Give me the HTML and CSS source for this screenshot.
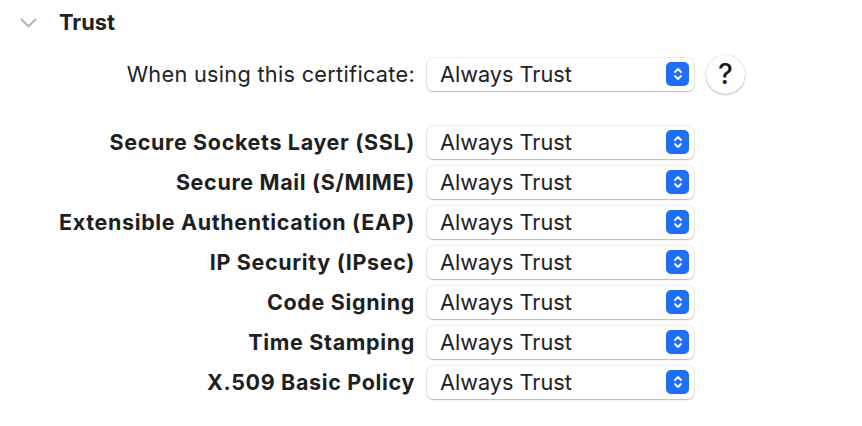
FILE: index.html
```html
<!DOCTYPE html>
<html>
<head>
<meta charset="utf-8">
<link rel="stylesheet" href="styles.css">
</head>
<body>
<div class="panel">
  <div class="header">
    <svg class="chev" width="17" height="10" viewBox="0 0 17 10"><path d="M1.5 1.5 L8.5 8.2 L15.5 1.5" fill="none" stroke="#b3b3b3" stroke-width="2" stroke-linecap="round" stroke-linejoin="round"/></svg>
    <span class="title">Trust</span>
  </div>
  <div class="main-row">
    <span class="main-label">When using this certificate:</span>
    <div class="popup"><span>Always Trust</span><span class="stepper"><svg width="10" height="16" viewBox="0 0 10 16"><path d="M2 6 L5 3 L8 6 M2 10 L5 13 L8 10" fill="none" stroke="#fff" stroke-width="1.8" stroke-linecap="round" stroke-linejoin="round"/></svg></span></div>
    <div class="help">?</div>
  </div>
  <div class="grid">
    <span class="label">Secure Sockets Layer (SSL)</span>
    <div class="popup"><span>Always Trust</span><span class="stepper"><svg width="10" height="16" viewBox="0 0 10 16"><path d="M2 6 L5 3 L8 6 M2 10 L5 13 L8 10" fill="none" stroke="#fff" stroke-width="1.8" stroke-linecap="round" stroke-linejoin="round"/></svg></span></div>
    <span class="label">Secure Mail (S/MIME)</span>
    <div class="popup"><span>Always Trust</span><span class="stepper"><svg width="10" height="16" viewBox="0 0 10 16"><path d="M2 6 L5 3 L8 6 M2 10 L5 13 L8 10" fill="none" stroke="#fff" stroke-width="1.8" stroke-linecap="round" stroke-linejoin="round"/></svg></span></div>
    <span class="label">Extensible Authentication (EAP)</span>
    <div class="popup"><span>Always Trust</span><span class="stepper"><svg width="10" height="16" viewBox="0 0 10 16"><path d="M2 6 L5 3 L8 6 M2 10 L5 13 L8 10" fill="none" stroke="#fff" stroke-width="1.8" stroke-linecap="round" stroke-linejoin="round"/></svg></span></div>
    <span class="label">IP Security (IPsec)</span>
    <div class="popup"><span>Always Trust</span><span class="stepper"><svg width="10" height="16" viewBox="0 0 10 16"><path d="M2 6 L5 3 L8 6 M2 10 L5 13 L8 10" fill="none" stroke="#fff" stroke-width="1.8" stroke-linecap="round" stroke-linejoin="round"/></svg></span></div>
    <span class="label">Code Signing</span>
    <div class="popup"><span>Always Trust</span><span class="stepper"><svg width="10" height="16" viewBox="0 0 10 16"><path d="M2 6 L5 3 L8 6 M2 10 L5 13 L8 10" fill="none" stroke="#fff" stroke-width="1.8" stroke-linecap="round" stroke-linejoin="round"/></svg></span></div>
    <span class="label">Time Stamping</span>
    <div class="popup"><span>Always Trust</span><span class="stepper"><svg width="10" height="16" viewBox="0 0 10 16"><path d="M2 6 L5 3 L8 6 M2 10 L5 13 L8 10" fill="none" stroke="#fff" stroke-width="1.8" stroke-linecap="round" stroke-linejoin="round"/></svg></span></div>
    <span class="label">X.509 Basic Policy</span>
    <div class="popup"><span>Always Trust</span><span class="stepper"><svg width="10" height="16" viewBox="0 0 10 16"><path d="M2 6 L5 3 L8 6 M2 10 L5 13 L8 10" fill="none" stroke="#fff" stroke-width="1.8" stroke-linecap="round" stroke-linejoin="round"/></svg></span></div>
  </div>
</div>
</body>
</html>
```
FILE: styles.css
```css
html, body {
  margin: 0;
  padding: 0;
  background: #ffffff;
}
body {
  width: 862px;
  height: 426px;
  font-family: Inter, "Noto Sans", "Liberation Sans", sans-serif;
  color: #1d1d1f;
}
.panel {
  padding-top: 8px;
}
.header {
  display: flex;
  align-items: center;
  height: 28px;
  padding-left: 20px;
}
.chev {
  display: block;
  margin-top: 1px;
}
.title {
  margin-left: 22px;
  font-size: 21.8px;
  font-weight: 700;
  color: #1f1f1f;
}
.main-row {
  display: flex;
  align-items: center;
  margin-top: 18px;
  padding-left: 100px;
  height: 40px;
}
.main-label {
  width: 315px;
  text-align: right;
  font-size: 21.7px;
  letter-spacing: 0.3px;
  color: #222;
  white-space: nowrap;
}
.main-row .popup {
  margin-left: 12px;
}
.help {
  margin-left: 12px;
  width: 39px;
  height: 39px;
  border-radius: 50%;
  background: #fff;
  box-shadow: 0 0 0 0.5px rgba(0,0,0,0.12), 0 1px 2px rgba(0,0,0,0.22);
  display: flex;
  align-items: center;
  justify-content: center;
  font-size: 28px;
  font-weight: 500;
  color: #1a1a1a;
}
.grid {
  display: grid;
  grid-template-columns: 415px 267px;
  column-gap: 12px;
  grid-auto-rows: 40px;
  align-items: center;
  margin-top: 28px;
}
.label {
  text-align: right;
  font-size: 21.5px;
  font-weight: 700;
  letter-spacing: 0.65px;
  color: #1f1f1f;
  white-space: nowrap;
}
.popup {
  box-sizing: border-box;
  width: 267px;
  height: 33px;
  border-radius: 6px;
  background: #fff;
  box-shadow: 0 0 0 0.5px rgba(0,0,0,0.14), 0 1px 1.5px rgba(0,0,0,0.22);
  display: flex;
  align-items: center;
  justify-content: space-between;
  padding-left: 13px;
  padding-right: 5px;
  font-size: 21.7px;
  color: #222;
}
.stepper {
  width: 23px;
  height: 24px;
  border-radius: 5px;
  background: #1f6ff6;
  display: flex;
  align-items: center;
  justify-content: center;
}
.stepper svg {
  display: block;
}
```
